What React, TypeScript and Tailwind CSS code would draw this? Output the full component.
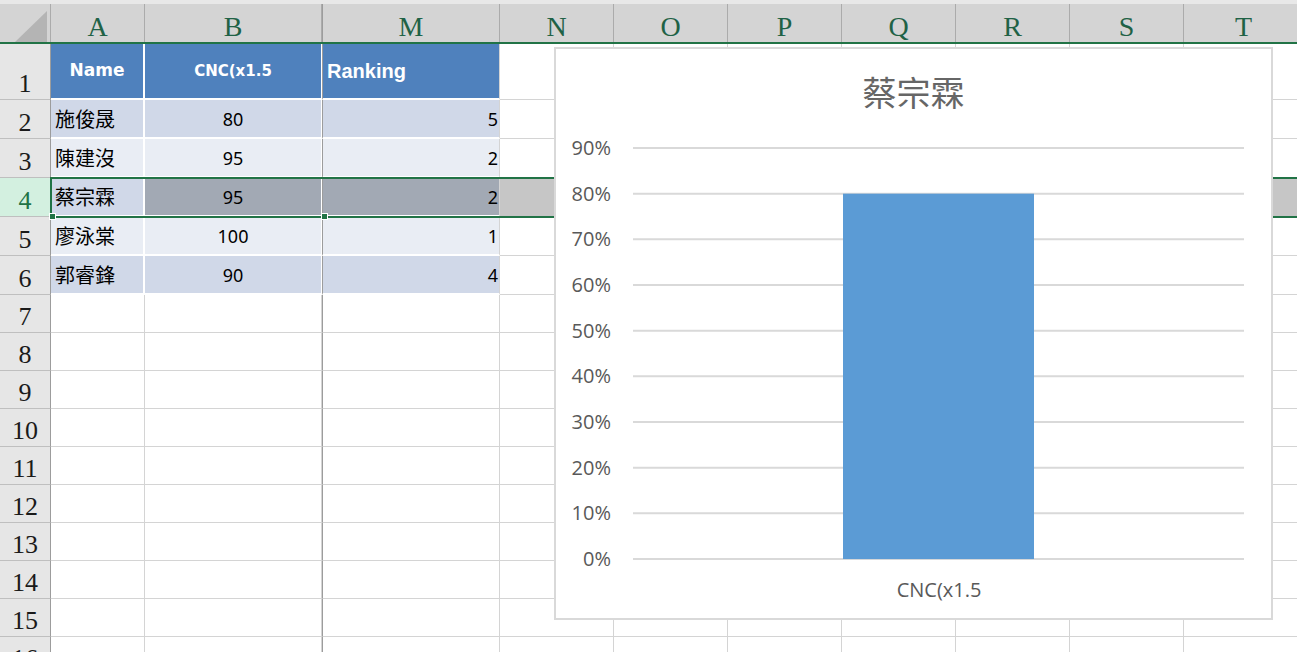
import React from 'react';

// ─── Sheet data ───────────────────────────────────────────────────────────────

const COLS = [
    { key: 'A', w: 'w-[94px]' },
    { key: 'B', w: 'w-[177px]' },
    { key: 'M', w: 'w-[178px]' },
    { key: 'N', w: 'w-[114px]' },
    { key: 'O', w: 'w-[114px]' },
    { key: 'P', w: 'w-[114px]' },
    { key: 'Q', w: 'w-[114px]' },
    { key: 'R', w: 'w-[114px]' },
    { key: 'S', w: 'w-[114px]' },
    { key: 'T', w: 'w-[120px]' },
];

const DATA = [
    { n: 2, name: '施俊晟', cnc: '80', rank: '5' },
    { n: 3, name: '陳建沒', cnc: '95', rank: '2' },
    { n: 4, name: '蔡宗霖', cnc: '95', rank: '2' },
    { n: 5, name: '廖泳棠', cnc: '100', rank: '1' },
    { n: 6, name: '郭睿鋒', cnc: '90', rank: '4' },
];

const EMPTY_ROWS = [7, 8, 9, 10, 11, 12, 13, 14, 15, 16];

const serif = "font-['Liberation_Serif','DejaVu_Serif',serif]";
const cjk = "font-['Noto_Sans_CJK_TC',sans-serif]";
const num = "font-['Noto_Sans','Noto_Sans_CJK_TC',sans-serif]";

// ─── Pieces ───────────────────────────────────────────────────────────────────

function RowHead({ n, h, active }: { n: number; h: string; active?: boolean }) {
    return (
        <div
            className={`${h} w-[51px] shrink-0 flex items-end justify-center pb-[2px] border-r border-b border-r-[#9c9c9c] border-b-[#bfbfbf] ${
                active ? 'bg-[#d3f0e0] text-[#217346]' : 'bg-[#e6e6e6] text-[#1a1a1a]'
            }`}
        >
            <span className={`${serif} text-[26px] leading-none`}>{n}</span>
        </div>
    );
}

function EmptyCells({ from, h, fill }: { from: number; h: string; fill?: string }) {
    return (
        <>
            {COLS.slice(from).map(c => (
                <div
                    key={c.key}
                    className={`${h} ${c.w} shrink-0 border-r border-b border-[#d4d4d4] ${fill ?? 'bg-white'}`}
                />
            ))}
        </>
    );
}

// ─── Chart ────────────────────────────────────────────────────────────────────

const TICKS = [90, 80, 70, 60, 50, 40, 30, 20, 10, 0];
const GRID_TOP = 99;
const GRID_STEP = 45.67;

function Chart() {
    const y0 = GRID_TOP + 9 * GRID_STEP;
    const barTop = GRID_TOP + GRID_STEP;
    return (
        <div className="absolute left-[554px] top-[47px] w-[719px] h-[573px] border-2 border-[#d9d9d9] bg-white">
            <div className={`${cjk} absolute left-0 right-0 top-[23px] text-center text-[34px] leading-[40px] text-[#666666]`}>
                蔡宗霖
            </div>
            <svg width="715" height="569" className="absolute left-0 top-0">
                {TICKS.map((t, i) => {
                    const y = GRID_TOP + i * GRID_STEP;
                    return (
                        <g key={t}>
                            <line x1="77" x2="688" y1={y} y2={y} stroke="#d9d9d9" strokeWidth="2" />
                            <text
                                x="55"
                                y={y + 7}
                                textAnchor="end"
                                fontFamily="'Open Sans', sans-serif"
                                fontSize="20"
                                fill="#595959"
                            >
                                {t}%
                            </text>
                        </g>
                    );
                })}
                <rect x="287" y={barTop} width="191" height={y0 - barTop} fill="#5b9bd5" />
                <text
                    x="383"
                    y="548"
                    textAnchor="middle"
                    fontFamily="'Open Sans', sans-serif"
                    fontSize="20"
                    fill="#595959"
                >
                    CNC(x1.5
                </text>
            </svg>
        </div>
    );
}

// ─── App ──────────────────────────────────────────────────────────────────────

export default function App() {
    return (
        <div className="relative w-[1297px] h-[652px] overflow-hidden bg-white">
            {/* top strip */}
            <div className="h-[4px] bg-[#e8e8e8]" />

            {/* column headers */}
            <div className="flex h-[40px] bg-[#d4d4d4] border-b-2 border-[#217346]">
                <div className="w-[51px] shrink-0 relative border-r border-[#ababab]">
                    <svg width="50" height="38" className="absolute left-0 top-0">
                        <polygon points="15,38 47,38 47,7" fill="#b4b4b4" />
                    </svg>
                </div>
                {COLS.map(c => (
                    <div
                        key={c.key}
                        className={`${c.w} shrink-0 flex items-end justify-center border-r border-[#ababab] ${c.key === 'M' ? 'border-l border-l-[#9c9c9c]' : ''}`}
                    >
                        <span className={`${serif} text-[28px] leading-none text-[#1f6246] mb-[1px]`}>{c.key}</span>
                    </div>
                ))}
            </div>

            {/* row 1 - table header */}
            <div className="flex">
                <RowHead n={1} h="h-[56px]" />
                <div className="h-[56px] w-[94px] shrink-0 bg-[#4f81bd] border-r-2 border-b-2 border-white flex items-center justify-center">
                    <span className="font-['DejaVu_Sans',sans-serif] font-bold text-[17px] text-white">Name</span>
                </div>
                <div className="h-[56px] w-[177px] shrink-0 bg-[#4f81bd] border-r border-b-2 border-white flex items-center justify-center">
                    <span className="font-['DejaVu_Sans',sans-serif] font-bold text-[15px] text-white">CNC(x1.5</span>
                </div>
                <div className="h-[56px] w-[178px] shrink-0 bg-[#4f81bd] border-l border-l-[#9c9c9c] border-r border-r-[#d4d4d4] border-b-2 border-b-white flex items-center pl-[4px]">
                    <span className="font-['Liberation_Sans',sans-serif] font-bold text-[20px] text-white">Ranking</span>
                </div>
                <EmptyCells from={3} h="h-[56px]" />
            </div>

            {/* data rows */}
            {DATA.map(r => {
                const even = r.n % 2 === 0;
                const sel = r.n === 4;
                const band = even ? 'bg-[#d0d8e8]' : 'bg-[#e9edf4]';
                const selFill = sel ? 'bg-[#a2a9b4]' : band;
                return (
                    <div key={r.n} className="flex">
                        <RowHead n={r.n} h="h-[39px]" active={sel} />
                        <div className={`h-[39px] w-[94px] shrink-0 ${band} border-r-2 border-b-2 border-white flex items-center pl-[4px]`}>
                            <span className={`${cjk} text-[20px] leading-none text-black`}>{r.name}</span>
                        </div>
                        <div className={`h-[39px] w-[177px] shrink-0 ${selFill} border-r border-b-2 border-white flex items-center justify-center`}>
                            <span className={`${num} text-[18px] leading-none text-black`}>{r.cnc}</span>
                        </div>
                        <div className={`h-[39px] w-[178px] shrink-0 ${selFill} border-l border-l-[#9c9c9c] border-r border-r-[#d4d4d4] border-b-2 border-b-white flex items-center justify-end pr-[1px]`}>
                            <span className={`${num} text-[18px] leading-none text-black`}>{r.rank}</span>
                        </div>
                        <EmptyCells from={3} h="h-[39px]" fill={sel ? 'bg-[#c6c6c6]' : undefined} />
                    </div>
                );
            })}

            {/* empty rows */}
            {EMPTY_ROWS.map(n => (
                <div key={n} className="flex">
                    <RowHead n={n} h="h-[38px]" />
                    <div className="h-[38px] w-[94px] shrink-0 border-r border-b border-[#d4d4d4]" />
                    <div className="h-[38px] w-[177px] shrink-0 border-r border-b border-[#d4d4d4]" />
                    <div className="h-[38px] w-[178px] shrink-0 border-l border-l-[#9c9c9c] border-r border-b border-[#d4d4d4]" />
                    <EmptyCells from={3} h="h-[38px]" />
                </div>
            ))}

            {/* row 4 selection */}
            <div className="absolute left-[50px] top-[177px] w-[1260px] h-[41px] border-2 border-[#217346] pointer-events-none" />
            <div className="absolute left-[49px] top-[213px] w-[7px] h-[7px] bg-[#217346] border border-white" />
            <div className="absolute left-[321px] top-[213px] w-[7px] h-[7px] bg-[#217346] border border-white" />

            <Chart />
        </div>
    );
}
